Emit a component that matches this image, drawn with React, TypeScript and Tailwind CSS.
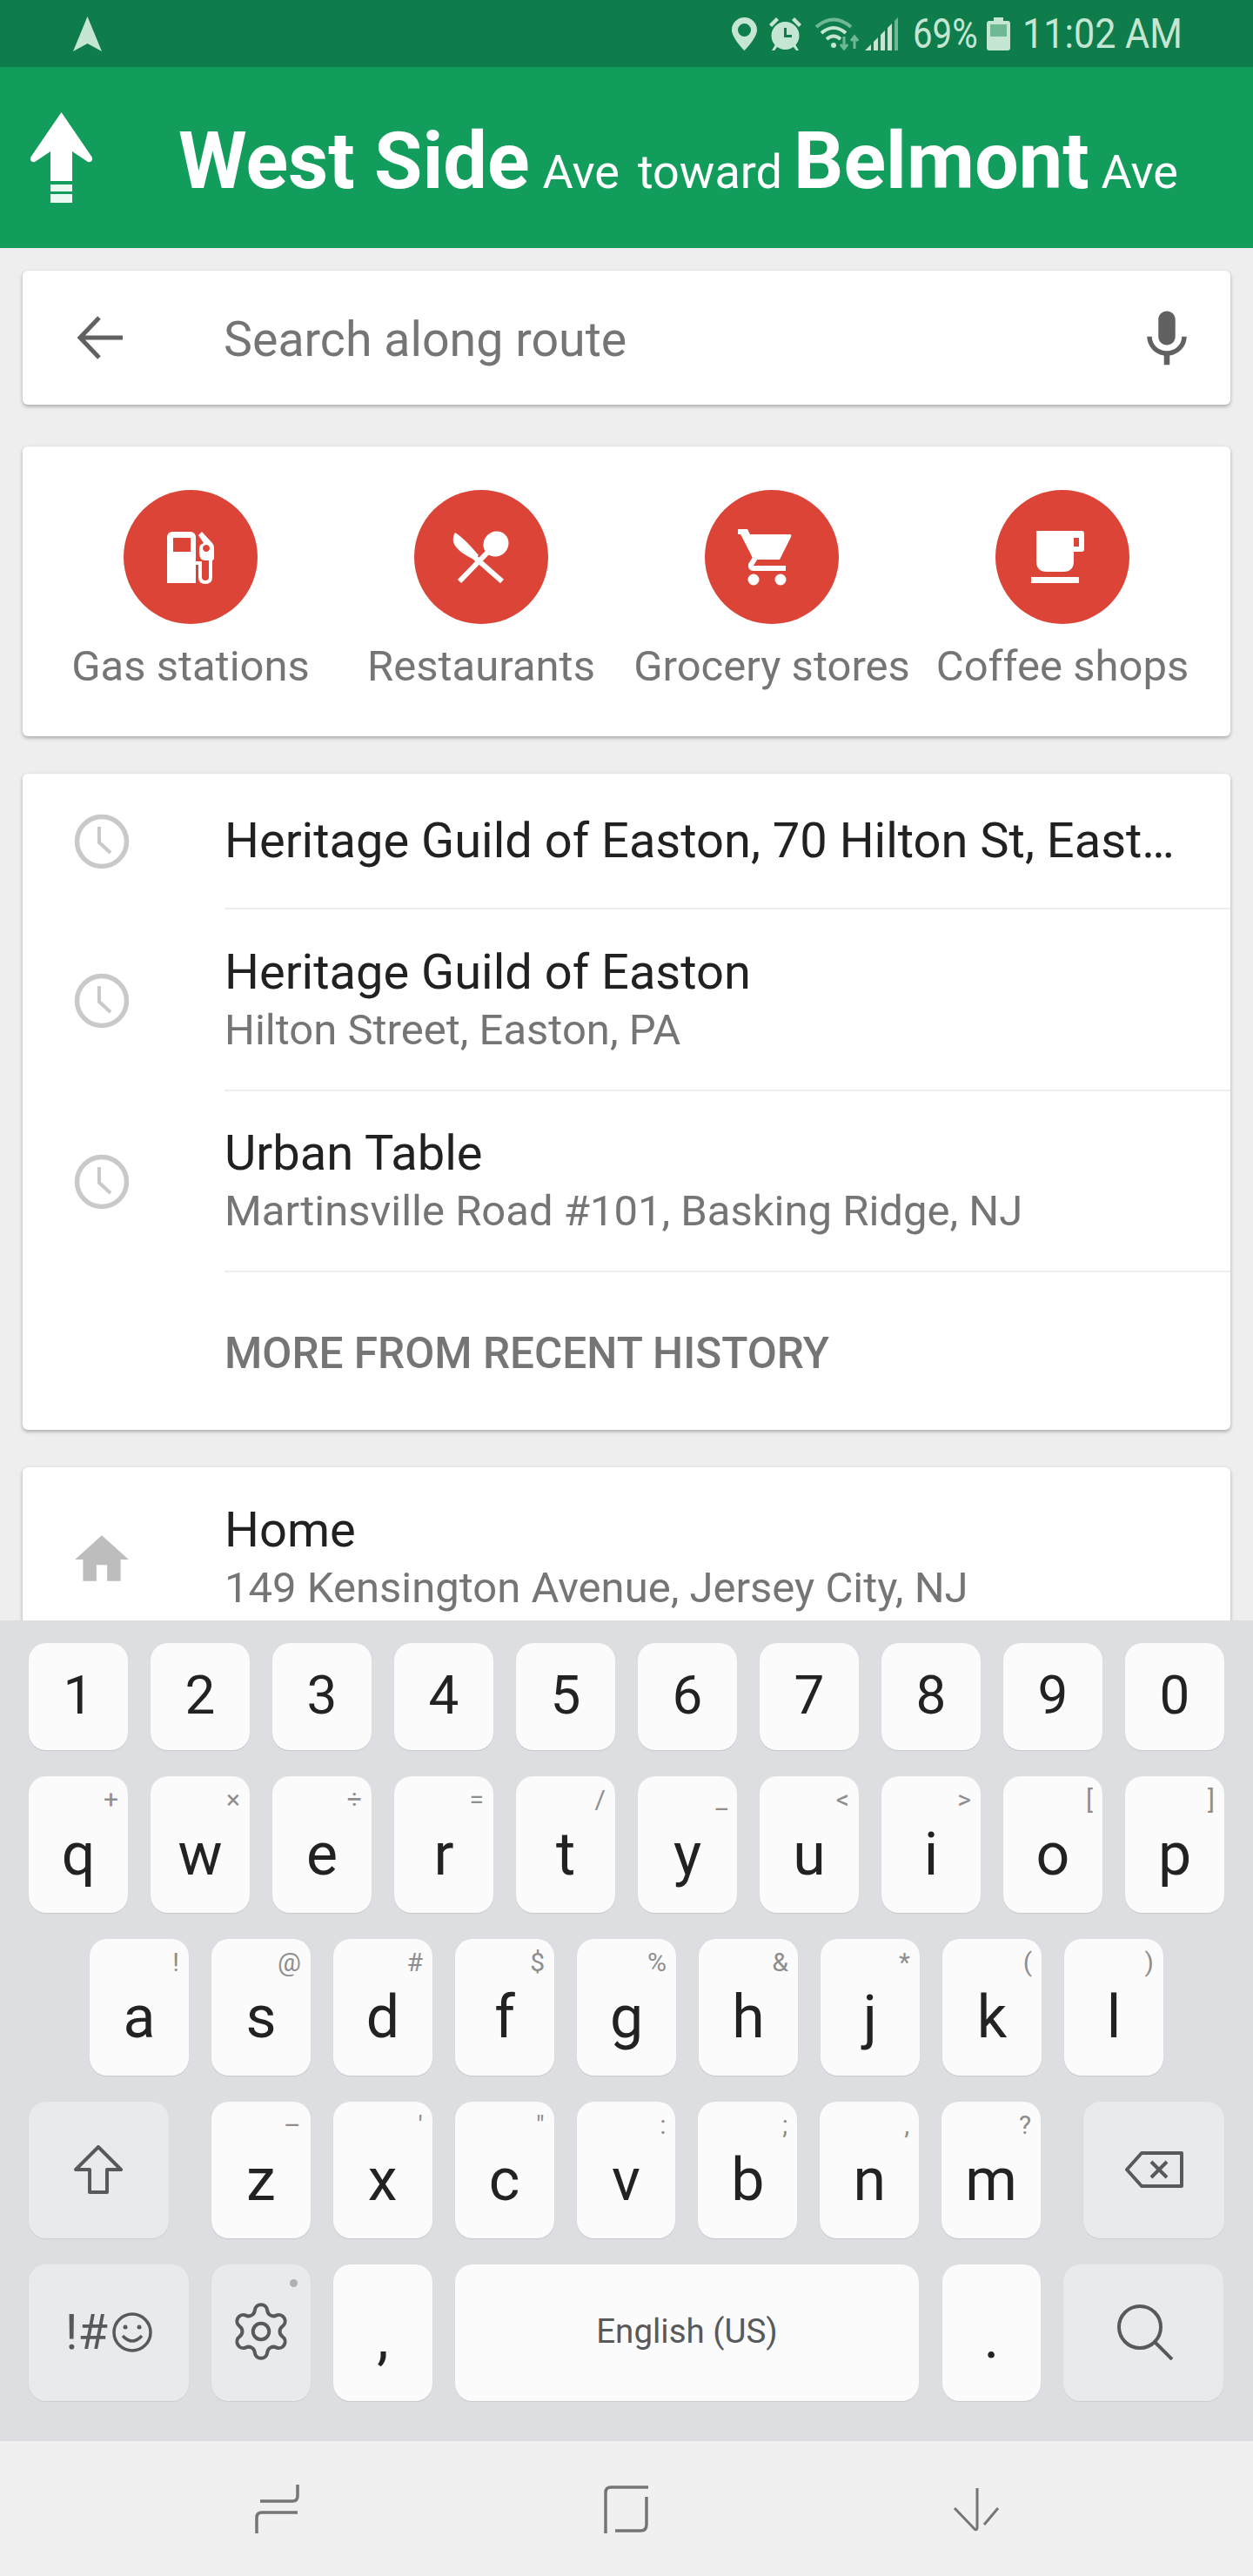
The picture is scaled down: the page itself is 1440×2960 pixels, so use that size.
import { Settings } from 'lucide-react';

const numbers = ['1', '2', '3', '4', '5', '6', '7', '8', '9', '0'];
const row1 = [['q', '+'], ['w', '×'], ['e', '÷'], ['r', '='], ['t', '/'], ['y', '_'], ['u', '<'], ['i', '>'], ['o', '['], ['p', ']']];
const row2 = [['a', '!'], ['s', '@'], ['d', '#'], ['f', '$'], ['g', '%'], ['h', '&'], ['j', '*'], ['k', '('], ['l', ')']];
const row3 = [['z', '–'], ['x', "'"], ['c', '"'], ['v', ':'], ['b', ';'], ['n', ','], ['m', '?']];

const GasIcon = () => (
  <svg viewBox="0 0 154 154" className="h-full w-full" fill="#fff">
    <path fillRule="evenodd" d="M56 48h21a6 6 0 0 1 6 6v53H50V54a6 6 0 0 1 6-6zm1 7v16h20V55z" />
    <path d="M83 84h5v16q0 6 6 6t6-6V70" fill="none" stroke="#fff" strokeWidth="4" />
    <path fillRule="evenodd" d="M90 48l12 13q2 2 2 6v11q0 3-3 3h-7q-7 0-7-9v-5q0-4 5-6l-6-9zm5 15a4 4 0 1 0 .01 0z" />
  </svg>
);

const FoodIcon = () => (
  <svg viewBox="0 0 154 154" className="h-full w-full" fill="#fff">
    <ellipse cx="94" cy="62" rx="15" ry="14" transform="rotate(-45 94 62)" />
    <path d="M85 71 52 105" stroke="#fff" strokeWidth="6" />
    <path d="M47 49q10 6 27 26l-5 5q-20-9-24-20q-1-6 2-11z" />
    <path d="M68 76l33 29" stroke="#fff" strokeWidth="6" />
  </svg>
);

const CartIcon = () => (
  <svg viewBox="0 0 154 154" className="h-full w-full" fill="#fff">
    <path d="M38 45h11l3 6h46q2 0 1 3L86 80H56z" />
    <path d="M38 48h8l12 30-5 8q-1 4 3 4h37" fill="none" stroke="#fff" strokeWidth="6" />
    <circle cx="56" cy="103" r="6.5" />
    <circle cx="87" cy="103" r="6.5" />
  </svg>
);

const CupIcon = () => (
  <svg viewBox="0 0 154 154" className="h-full w-full" fill="#fff">
    <path fillRule="evenodd" d="M47 47h52q3 0 3 3v18q0 3-3 3h-9v11q0 12-12 12H59q-12 0-12-12zm43 8v10h6V55z" />
    <path d="M41 100h55v7H41z" />
  </svg>
);

const ClockIcon = () => (
  <svg viewBox="0 0 64 64" className="h-16 w-16" fill="none" stroke="#c9c9c9" strokeWidth="5.5">
    <circle cx="32" cy="32" r="28.5" />
    <path d="M29 15v18l13 12" strokeWidth="4" />
  </svg>
);

function Category({ label, children }: { label: string; children: React.ReactNode }) {
  return (
    <div className="flex flex-col items-center">
      <div className="h-[154px] w-[154px] rounded-full bg-[#db4437]">{children}</div>
      <div className="mt-[17px] whitespace-nowrap text-[49px] leading-[64px] text-[#757575]">{label}</div>
    </div>
  );
}

function Place({ title, sub, icon, h = 'h-[209px]' }: { title: string; sub: string; icon: React.ReactNode; h?: string }) {
  return (
    <div className={`flex items-center ${h}`}>
      <div className="flex w-[232px] shrink-0 justify-center pr-[50px]">{icon}</div>
      <div className="flex h-full flex-1 flex-col justify-center border-b-2 border-[#eeeeee] pt-[4px]">
        <div className="text-[56px] leading-[66px] text-[#212121]">{title}</div>
        <div className="text-[49px] leading-[68px] text-[#757575]">{sub}</div>
      </div>
    </div>
  );
}

function Key({ label, hint, className = 'w-[114px]', top = 'pt-[56px]' }: { label: string; hint?: string; className?: string; top?: string }) {
  return (
    <div className={`relative flex justify-center rounded-[20px] bg-[#fbfbfb] text-[68px] leading-none text-[#222222] shadow-[0_1px_1px_rgba(0,0,0,0.1)] ${className} ${top}`}>
      {label}
      {hint && <span className="absolute right-[11px] top-[13px] text-[30px] leading-[28px] text-[#8e8e8e]">{hint}</span>}
    </div>
  );
}

function SpecialKey({ className, children }: { className: string; children: React.ReactNode }) {
  return (
    <div className={`relative flex justify-center rounded-[20px] bg-[#e9eaed] shadow-[0_1px_1px_rgba(0,0,0,0.08)] ${className}`}>
      {children}
    </div>
  );
}

export default function App() {
  return (
    <div className="flex h-[2960px] w-[1440px] flex-col overflow-hidden bg-[#eeeeee] font-['Roboto',sans-serif]">
      {/* status bar */}
      <div className="flex h-[77px] shrink-0 items-center bg-[#0f7c4b] pl-[84px] text-[#c5e6d3]">
        <svg viewBox="0 0 33 40" className="h-[40px] w-[33px]" fill="#c5e6d3">
          <path d="M16.5 0 33 40 16.5 31 0 40z" />
        </svg>
        <div className="ml-[724px] flex items-center">
          <svg viewBox="0 0 29 38" className="h-[38px] w-[29px]" fill="#c5e6d3">
            <path fillRule="evenodd" d="M14.5 0C6.5 0 0 6.3 0 14.2 0 24 14.5 38 14.5 38S29 24 29 14.2C29 6.3 22.500 0 14.500 0zm0 7a7.500 7.500 0 1 1 0 15 7.500 7.500 0 0 1 0-15z" />
          </svg>
          <svg viewBox="0 0 37 38" className="ml-[14px] h-[38px] w-[37px]" fill="#c5e6d3">
            <path fillRule="evenodd" d="M18.500 5a16 16 0 1 1 0 32 16 16 0 0 1 0-32zM17 12v11h9v-3h-6v-8z" />
            <path d="M0 8 8 0l3 3-8 8zM37 8l-8-8-3 3 8 8zM3 38l4-7 3 2-4 5zM34 38l-4-7-3 2 4 5z" />
          </svg>
          <svg viewBox="0 0 50 38" className="ml-[16px] h-[38px] w-[50px]" fill="none" stroke="#c5e6d3" strokeWidth="4">
            <path d="M1 11Q21-6 41 11" stroke="#6fb894" />
            <path d="M7 18Q21 6 35 18" />
            <path d="M13 25Q21 18 29 25" />
            <circle cx="21" cy="32" r="3" fill="#c5e6d3" stroke="none" />
            <path d="M33 22v14M29 31l4 5 4-5" stroke="#6fb894" strokeWidth="3" />
            <path d="M45 36V22M41 27l4-5 4 5" stroke="#6fb894" strokeWidth="3" />
          </svg>
          <svg viewBox="0 0 38 38" className="ml-[7px] h-[38px] w-[38px]" fill="#c5e6d3">
            <path d="M0 38 7 31v7zM10 28l5-5v15h-5zM18 20l5-5v23h-5zM26 12l5-5v31h-5z" />
            <path d="M34 4l4-4v38h-4z" fill="#6fb894" />
          </svg>
          <span className="ml-[17px] w-[74px] origin-left scale-x-[.82] whitespace-nowrap text-[49px] leading-none">69%</span>
          <svg viewBox="0 0 27 38" className="ml-[11px] h-[38px] w-[27px]" fill="#c5e6d3">
            <path fillRule="evenodd" d="M8 0h11v4h5q3 0 3 3v28q0 3-3 3H3q-3 0-3-3V7q0-3 3-3h5zM4 8v14h19V8z" />
            <path d="M4 8h19v14H4z" fill="#6fb894" />
          </svg>
          <span className="ml-[14px] w-[175px] origin-left scale-x-[.88] whitespace-nowrap text-[49px] leading-none">11:02 AM</span>
        </div>
      </div>

      {/* direction header */}
      <div className="flex h-[208px] shrink-0 items-center bg-[#139d5c] pl-[35px] text-white">
        <svg viewBox="0 0 71 104" className="h-[104px] w-[71px]" fill="#fff">
          <path d="M35.500 0 71 52q1 6-5 5L48 45v34H23V45L5 57q-6 1-5-5z" />
          <path d="M23 83h25v8H23zM23 94h25v10H23z" fill="#eafaf1" />
        </svg>
        <div className="ml-[99px] mt-[10px] flex items-baseline whitespace-nowrap">
          <span className="text-[90px] font-bold leading-none">West Side</span>
          <span className="ml-[15px] text-[54px] leading-none">Ave</span>
          <span className="ml-[21px] text-[54px] leading-none">toward</span>
          <span className="ml-[13px] text-[90px] font-bold leading-none">Belmont</span>
          <span className="ml-[14px] text-[54px] leading-none">Ave</span>
        </div>
      </div>

      {/* scrolling content */}
      <div className="min-h-0 flex-1 overflow-hidden px-[26px] pt-[26px]">
        <div className="flex h-[154px] items-center rounded-[6px] bg-white pl-[63px] pr-[34px] shadow-[0_2px_4px_rgba(0,0,0,0.3)]">
          <svg viewBox="0 0 52 50" className="h-[50px] w-[52px]" fill="none" stroke="#616161" strokeWidth="5">
            <path d="M25 2 3 25l22 23M3 25h49" />
          </svg>
          <span className="ml-[116px] flex-1 pt-[5px] text-[55.5px] leading-none text-[#757575]">Search along route</span>
          <svg viewBox="0 0 24 24" className="mt-[3px] h-[78px] w-[78px]" fill="#616161">
            <path d="M12 14c1.660 0 2.990-1.340 2.990-3L15 5c0-1.660-1.340-3-3-3S9 3.340 9 5v6c0 1.660 1.340 3 3 3zm5.300-3c0 3-2.540 5.100-5.300 5.100S6.700 14 6.700 11H5c0 3.410 2.720 6.230 6 6.720V21h2v-3.280c3.280-.48 6-3.300 6-6.720h-1.700z" />
          </svg>
        </div>

        <div className="mt-[48px] grid h-[333px] grid-cols-[repeat(4,334px)] rounded-[6px] bg-white pl-[26px] pt-[50px] shadow-[0_2px_4px_rgba(0,0,0,0.3)]">
          <Category label="Gas stations"><GasIcon /></Category>
          <Category label="Restaurants"><FoodIcon /></Category>
          <Category label="Grocery stores"><CartIcon /></Category>
          <Category label="Coffee shops"><CupIcon /></Category>
        </div>

        <div className="mt-[43px] rounded-[6px] bg-white shadow-[0_2px_4px_rgba(0,0,0,0.3)]">
          <div className="flex h-[156px] items-center">
            <div className="flex w-[232px] shrink-0 justify-center pr-[50px]"><ClockIcon /></div>
            <div className="flex h-full min-w-0 flex-1 items-center border-b-2 border-[#eeeeee]">
              <span className="whitespace-nowrap text-[56px] leading-[66px] text-[#212121]">Heritage Guild of Easton, 70 Hilton St, East…</span>
            </div>
          </div>
          <Place title="Heritage Guild of Easton" sub="Hilton Street, Easton, PA" icon={<ClockIcon />} />
          <Place title="Urban Table" sub="Martinsville Road #101, Basking Ridge, NJ" icon={<ClockIcon />} h="h-[208px]" />
          <div className="flex h-[181px] items-center pl-[232px] pt-[6px] text-[49.5px] font-medium leading-none text-[#757575]">
            MORE FROM RECENT HISTORY
          </div>
        </div>

        <div className="mt-[43px] h-[240px] rounded-[6px] bg-white shadow-[0_2px_4px_rgba(0,0,0,0.3)]">
          <div className="flex h-[212px] items-center">
            <div className="flex w-[232px] shrink-0 justify-center pr-[50px]">
              <svg viewBox="0 0 24 24" className="h-[74px] w-[74px]" fill="#bdbdbd">
                <path d="M10 20v-6h4v6h5v-8h3L12 3 2 12h3v8z" />
              </svg>
            </div>
            <div className="flex h-full flex-1 flex-col justify-center">
              <div className="text-[56px] leading-[66px] text-[#212121]">Home</div>
              <div className="text-[49px] leading-[68px] text-[#757575]">149 Kensington Avenue, Jersey City, NJ</div>
            </div>
          </div>
        </div>
      </div>

      {/* keyboard */}
      <div className="flex h-[943px] shrink-0 flex-col gap-[30px] bg-[#dcdee1] pl-[33px] pr-[33px] pt-[26px]">
        <div className="flex h-[123px] gap-[26px]">
          {numbers.map((n) => (
            <Key key={n} label={n} top="pt-[29px]" className="w-[114px] !text-[62px]" />
          ))}
        </div>
        <div className="flex h-[157px] gap-[26px]">
          {row1.map(([k, h]) => <Key key={k} label={k} hint={h} />)}
        </div>
        <div className="flex h-[157px] justify-center gap-[26px]">
          {row2.map(([k, h]) => <Key key={k} label={k} hint={h} />)}
        </div>
        <div className="flex h-[157px] gap-[26px]">
          <SpecialKey className="mr-[23px] w-[161px] pt-[50px]">
            <svg viewBox="0 0 56 56" className="h-[56px] w-[56px]" fill="none" stroke="#58595b" strokeWidth="4" strokeLinejoin="round">
              <path d="M28 2 54 28H38v26H18V28H2z" />
            </svg>
          </SpecialKey>
          {row3.map(([k, h]) => <Key key={k} label={k} hint={h} />)}
          <SpecialKey className="ml-[23px] w-[162px] pt-[57px]">
            <svg viewBox="0 0 67 42" className="h-[42px] w-[67px]" fill="none" stroke="#58595b" strokeWidth="4" strokeLinejoin="round">
              <path d="M19 2h46v38H19L2 21zM30 12l18 18M48 12 30 30" />
            </svg>
          </SpecialKey>
        </div>
        <div className="flex h-[157px] gap-[26px]">
          <SpecialKey className="w-[184px] items-center pb-[2px] text-[#58595b]">
            <span className="text-[56px] leading-none">!#</span>
            <svg viewBox="0 0 46 46" className="ml-[5px] h-[46px] w-[46px]" fill="none" stroke="#58595b" strokeWidth="3.500">
              <circle cx="23" cy="23" r="21" />
              <path d="M12 27q11 12 22 0" />
              <circle cx="15" cy="17" r="2.500" fill="#58595b" stroke="none" />
              <circle cx="31" cy="17" r="2.500" fill="#58595b" stroke="none" />
            </svg>
          </SpecialKey>
          <SpecialKey className="w-[114px] items-center pb-[3px]">
            <Settings size={74} strokeWidth={1.300} color="#58595b" />
            <span className="absolute right-[15px] top-[17px] h-[9px] w-[9px] rounded-full bg-[#b0b0b0]" />
          </SpecialKey>
          <Key label="," top="pt-[50px]" />
          <div className="flex w-[533px] items-center justify-center rounded-[20px] bg-[#fbfbfb] pb-[2px] text-[38.5px] leading-none text-[#58595b] shadow-[0_1px_1px_rgba(0,0,0,0.1)]">
            English (US)
          </div>
          <Key label="." top="pt-[50px]" className="ml-[1px] w-[113px]" />
          <SpecialKey className="w-[184px] pl-[3px] pt-[46px]">
            <svg viewBox="0 0 64 64" className="h-[64px] w-[64px]" fill="none" stroke="#58595b" strokeWidth="4">
              <circle cx="26" cy="26" r="24" />
              <path d="M43 43l20 20" />
            </svg>
          </SpecialKey>
        </div>
      </div>

      {/* nav bar */}
      <div className="flex h-[155px] shrink-0 items-center justify-center gap-[342px] bg-[#f0f0f1]">
        <svg viewBox="0 0 60 60" className="h-[60px] w-[60px]" fill="none" stroke="#757575" strokeWidth="3">
          <path d="M54 2v13q0 6-6 6H11" strokeWidth="3.500" />
          <path d="M54 34H13q-6 0-6 6v18" strokeWidth="3.500" />
        </svg>
        <svg viewBox="0 0 60 60" className="h-[60px] w-[60px]" fill="none" stroke="#757575" strokeWidth="3">
          <path d="M55 5H12q-6 0-6 6v47" strokeWidth="3.500" />
          <path d="M53 16v32q0 7-7 7H17" strokeWidth="3.500" />
        </svg>
        <svg viewBox="0 0 60 60" className="h-[60px] w-[60px]" fill="none" stroke="#757575" strokeWidth="3">
          <path d="M31 6v46q-1 3-3 1L5 29" />
          <path d="M55 29 39 48" />
        </svg>
      </div>
    </div>
  );
}
